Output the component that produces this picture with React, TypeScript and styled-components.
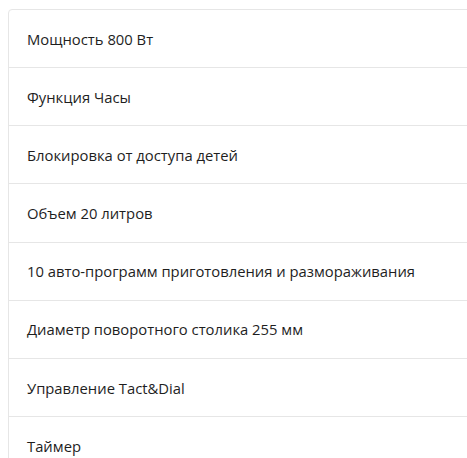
import styled, { createGlobalStyle } from 'styled-components';

const GlobalStyle = createGlobalStyle`
	body {
		margin: 0;
		background: #fff;
		font-family: "Open Sans", "Liberation Sans", sans-serif;
	}
`;

const features: string[] = [
	'Мощность 800 Вт',
	'Функция Часы',
	'Блокировка от доступа детей',
	'Объем 20 литров',
	'10 авто-программ приготовления и размораживания',
	'Диаметр поворотного столика 255 мм',
	'Управление Tact&Dial',
	'Таймер',
];

const App = (): JSX.Element => (
	<>
		<GlobalStyle />
		<Page>
			<Card>
				{features.map((f) => (
					<Row key={f}>{f}</Row>
				))}
			</Card>
		</Page>
	</>
);

const Page = styled.div`
	padding: 9px 0 0 8px;
	overflow: hidden;
	height: 458px;
	box-sizing: border-box;
`;

const Card = styled.ul`
	list-style: none;
	margin: 0;
	padding: 0;
	width: 500px;
	border: 1px solid #e6e6e6;
	border-radius: 4px;
	background: #fff;
`;

const Row = styled.li`
	height: 57.2px;
	display: flex;
	align-items: center;
	padding: 0 18px;
	font-size: 14.8px;
	color: #1e1e1e;
	border-top: 1px solid #e6e6e6;

	&:first-child {
		height: 57px;
		border-top: none;
	}
`;

export default App;
